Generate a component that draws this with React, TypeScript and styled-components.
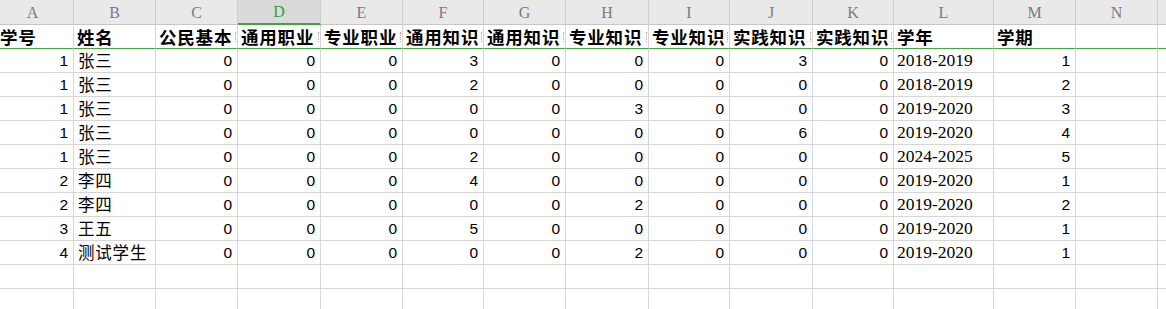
import React from "react";
import styled, { createGlobalStyle, css } from "styled-components";

const GlobalStyle = createGlobalStyle`
  html, body { margin: 0; padding: 0; background: #ffffff; }
  body { overflow: hidden; }
`;

const COLS = [82, 82, 82, 83, 82, 81, 82, 83, 81, 83, 81, 100, 82, 82, 100];
const LETTERS = ["A", "B", "C", "D", "E", "F", "G", "H", "I", "J", "K", "L", "M", "N", ""];
const SELECTED = 3;

const HEADERS = ["学号", "姓名", "公民基本", "通用职业", "专业职业", "通用知识", "通用知识", "专业知识", "专业知识", "实践知识", "实践知识", "学年", "学期"];

type Row = [number, string, number, number, number, number, number, number, number, number, number, string, number];

const DATA: Row[] = [
  [1, "张三", 0, 0, 0, 3, 0, 0, 0, 3, 0, "2018-2019", 1],
  [1, "张三", 0, 0, 0, 2, 0, 0, 0, 0, 0, "2018-2019", 2],
  [1, "张三", 0, 0, 0, 0, 0, 3, 0, 0, 0, "2019-2020", 3],
  [1, "张三", 0, 0, 0, 0, 0, 0, 0, 6, 0, "2019-2020", 4],
  [1, "张三", 0, 0, 0, 2, 0, 0, 0, 0, 0, "2024-2025", 5],
  [2, "李四", 0, 0, 0, 4, 0, 0, 0, 0, 0, "2019-2020", 1],
  [2, "李四", 0, 0, 0, 0, 0, 2, 0, 0, 0, "2019-2020", 2],
  [3, "王五", 0, 0, 0, 5, 0, 0, 0, 0, 0, "2019-2020", 1],
  [4, "测试学生", 0, 0, 0, 0, 0, 2, 0, 0, 0, "2019-2020", 1],
];

const Sheet = styled.div`
  width: 1166px;
  height: 309px;
  overflow: hidden;
  background: #ffffff;
`;

const Grid = styled.div`
  display: grid;
  grid-template-columns: ${COLS.map((w) => `${w}px`).join(" ")};
  grid-template-rows: 25px 24px;
  grid-auto-rows: 24px;
  margin-left: -8px;
  width: max-content;
`;

const ColHeader = styled.div<{ $selected?: boolean }>`
  box-sizing: border-box;
  background: #e9e9e9;
  border-right: 1px solid #cfcfcf;
  border-bottom: 1px solid #c6c6c6;
  display: flex;
  align-items: center;
  justify-content: center;
  font-family: "Liberation Serif", "DejaVu Serif", serif;
  font-size: 16px;
  color: #7b7b7b;
  padding-top: 1px;
  ${(p) =>
    p.$selected &&
    css`
      background: #dadada;
      color: #3c9a3c;
      border-bottom: 2px solid #3fa33f;
    `}
`;

const Cell = styled.div<{
  $kind: "head" | "num" | "text" | "year" | "empty";
  $first?: boolean;
  $mark?: boolean;
  $edge?: boolean;
}>`
  position: relative;
  box-sizing: border-box;
  border-right: 1px solid #d6d6d6;
  border-bottom: 1px solid ${(p) => (p.$first ? "#44a544" : "#d6d6d6")};
  display: flex;
  align-items: center;
  white-space: nowrap;
  overflow: hidden;
  color: #000000;
  line-height: 23px;
  ${(p) =>
    p.$kind === "head" &&
    css`
      font-family: "Noto Sans CJK SC", "Noto Sans", sans-serif;
      font-weight: 700;
      font-size: 17.5px;
      letter-spacing: 0.8px;
      padding-left: ${p.$edge ? "8px" : "3px"};
    `}
  ${(p) =>
    p.$kind === "text" &&
    css`
      font-family: "Noto Sans CJK SC", "Noto Sans", sans-serif;
      font-size: 16.5px;
      letter-spacing: 0.8px;
      padding-left: 4px;
    `}
  ${(p) =>
    p.$kind === "num" &&
    css`
      font-family: "Liberation Sans", Arial, sans-serif;
      font-size: 15.5px;
      justify-content: flex-end;
      padding-right: 5px;
    `}
  ${(p) =>
    p.$kind === "year" &&
    css`
      font-family: "Liberation Serif", "DejaVu Serif", serif;
      font-size: 17.5px;
      padding-left: 3px;
    `}
  ${(p) =>
    p.$mark &&
    css`
      &::after {
        content: "";
        position: absolute;
        right: 1px;
        top: 7px;
        height: 10px;
        border-right: 1px dotted #e49a7a;
      }
    `}
`;

const EMPTY_ROWS = 2;

export default function App() {
  return (
    <Sheet>
      <GlobalStyle />
      <Grid>
        {LETTERS.map((l, i) => (
          <ColHeader key={`h${i}`} $selected={i === SELECTED}>
            {l}
          </ColHeader>
        ))}
        {COLS.map((_, i) => (
          <Cell
            key={`t${i}`}
            $kind={i < HEADERS.length ? "head" : "empty"}
            $first
            $edge={i === 0}
            $mark={i >= 2 && i <= 10}
          >
            {HEADERS[i] ?? ""}
          </Cell>
        ))}
        {DATA.map((row, r) =>
          COLS.map((_, i) => {
            const v = i < row.length ? row[i] : "";
            const kind = i >= row.length ? "empty" : i === 1 ? "text" : i === 11 ? "year" : "num";
            return (
              <Cell key={`r${r}c${i}`} $kind={kind}>
                {v}
              </Cell>
            );
          })
        )}
        {Array.from({ length: EMPTY_ROWS }).map((_, r) =>
          COLS.map((_, i) => <Cell key={`e${r}c${i}`} $kind="empty" />)
        )}
      </Grid>
    </Sheet>
  );
}
